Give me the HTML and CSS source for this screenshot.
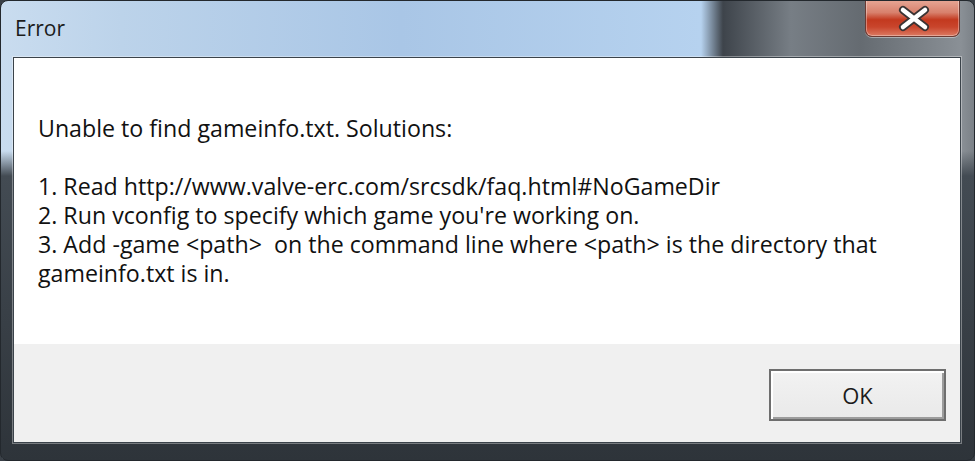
FILE: index.html
```html
<!DOCTYPE html>
<html lang="en">
<head>
  <meta charset="UTF-8">
  <title>Error</title>
  <link rel="stylesheet" href="styles.css">
</head>
<body>
  <div class="window">
    <div class="titlebar">
      <span class="title">Error</span>
      <button class="close" aria-label="Close">
        <svg width="95" height="37" viewBox="0 0 95 37">
          <path d="M37 10 L59 27 M59 10 L37 27" stroke="#3b3434" stroke-width="8" stroke-linecap="round"/>
          <path d="M37 10 L59 27 M59 10 L37 27" stroke="#fff" stroke-width="4.5" stroke-linecap="round"/>
        </svg>
      </button>
    </div>
    <div class="client">
      <div class="message">
        <p>Unable to find gameinfo.txt. Solutions:</p>
        <p>1. Read http://www.valve-erc.com/srcsdk/faq.html#NoGameDir<br>
        2. Run vconfig to specify which game you're working on.<br>
        3. Add -game &lt;path&gt;&nbsp; on the command line where &lt;path&gt; is the directory that<br>
        gameinfo.txt is in.</p>
      </div>
      <div class="buttons">
        <button class="ok">OK</button>
      </div>
    </div>
  </div>
</body>
</html>
```

FILE: styles.css
```css
* { box-sizing: border-box; }
body { margin: 0; background: #3a4047; }

.window {
  width: 975px;
  height: 461px;
  display: flex;
  flex-direction: column;
  border: 1px solid #23282d;
  border-radius: 8px;
  overflow: hidden;
  background:
    linear-gradient(to bottom, transparent 0, transparent 150px, #434b53 175px, #2e343a 100%),
    linear-gradient(to right, #c9dcef 0, #bcd3ea 120px, #a9c6e6 400px, #b6d2ef 700px, #3e444b 722px, #777e85 790px, #656b71 860px, #8a9096 960px, #7b8187 100%);
  font-family: "Open Sans", "Noto Sans", sans-serif;
}

.titlebar {
  height: 56px;
  display: flex;
  justify-content: space-between;
  align-items: flex-start;
  padding: 0 14px 0 14px;
}
.title {
  margin-top: 13px;
  font-size: 21px;
  color: #1b1b1b;
}
.close {
  width: 95px;
  height: 37px;
  margin-top: -1px;
  padding: 0;
  border: 1px solid #6b3a33;
  border-top: none;
  border-radius: 0 0 7px 7px;
  background: linear-gradient(to bottom, #e7a796 0, #d8806c 35%, #c3391f 55%, #c9452c 75%, #dc7a62 100%);
  box-shadow: inset 0 0 0 1px rgba(255,255,255,0.35), 0 1px 0 rgba(255,255,255,0.4);
}
.close svg { display: block; }

.client {
  flex: 1;
  display: flex;
  flex-direction: column;
  margin: 0 13px 17px 12px;
  border: 1px solid #3b434a;
  box-shadow: 0 0 0 1px rgba(255,255,255,0.35);
}
.message {
  flex: 1;
  background: #fff;
  padding: 56px 24px 0;
  font-size: 23.2px;
  line-height: 29px;
  color: #111;
}
.message p { margin: 0 0 29px; }

.buttons {
  height: 98px;
  background: #f0f0f0;
  display: flex;
  justify-content: flex-end;
  align-items: flex-start;
  padding: 25px 14px 0 0;
}
.ok {
  width: 177px;
  height: 52px;
  border: 2px solid #6e6e6e;
  background: linear-gradient(to bottom, #f2f2f2, #e9e9e9);
  box-shadow: inset 2px 2px 0 #fff, inset -2px -2px 0 #9c9c9c;
  font-family: "Open Sans", "Noto Sans", sans-serif;
  font-size: 22px;
  color: #1b1b1b;
}
```
